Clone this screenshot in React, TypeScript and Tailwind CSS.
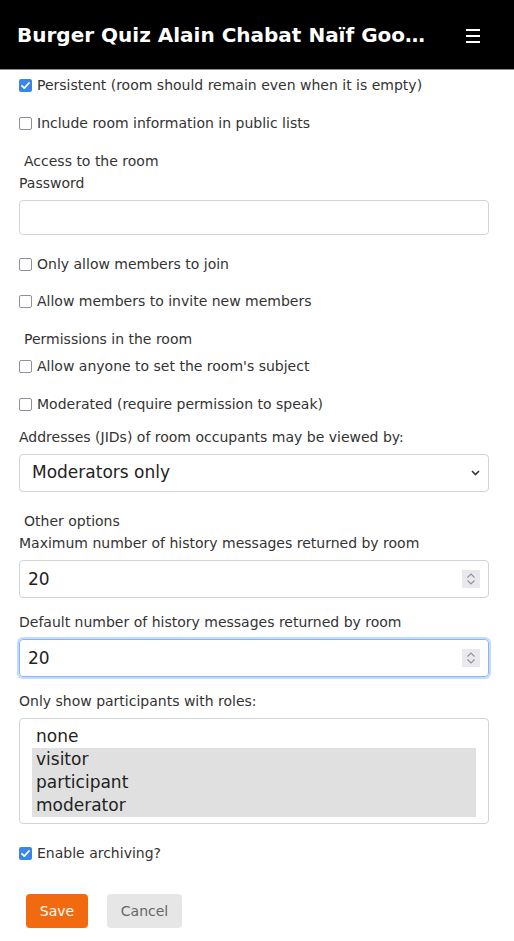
import React, { useState } from 'react';

const font = { fontFamily: '"DejaVu Sans", "Noto Sans", sans-serif' };

function CheckRow({ label, checked = false, className = '' }: { label: string; checked?: boolean; className?: string }) {
  const [on, setOn] = useState(checked);
  return (
    <label className={`flex h-5 items-center gap-[5px] text-[14px] text-[#333] ${className}`}>
      <span className="relative flex h-[13px] w-[13px]">
        <input
          type="checkbox"
          checked={on}
          onChange={() => setOn(!on)}
          className="peer h-[13px] w-[13px] appearance-none rounded-[2px] border-[1.5px] border-[#8f8f9d] checked:border-0 checked:bg-[#3b86e4]"
        />
        <svg
          viewBox="0 0 13 13"
          className="pointer-events-none absolute inset-0 hidden h-[13px] w-[13px] peer-checked:block"
          fill="none"
          stroke="white"
          strokeWidth="1.8"
          strokeLinecap="round"
          strokeLinejoin="round"
        >
          <path d="M3 6.8l2.3 2.3L10 4" />
        </svg>
      </span>
      <span>{label}</span>
    </label>
  );
}

function Legend({ children, className = '' }: { children: React.ReactNode; className?: string }) {
  return <div className={`h-5 pl-[5px] text-[14px] leading-5 text-[#333] ${className}`}>{children}</div>;
}

function Label({ children, className = '' }: { children: React.ReactNode; className?: string }) {
  return <div className={`h-5 text-[14px] leading-5 text-[#333] ${className}`}>{children}</div>;
}

function NumberField({ focused = false, className = '' }: { focused?: boolean; className?: string }) {
  return (
    <div className={`relative ${className}`}>
      <input
        type="number"
        defaultValue={20}
        className={`h-[38px] w-full rounded-[4px] border pl-2 pr-8 text-[17px] text-[#222] outline-none [appearance:textfield] [&::-webkit-inner-spin-button]:appearance-none [&::-webkit-outer-spin-button]:appearance-none ${
          focused
            ? 'border-[#86b7fe] shadow-[0_0_0_2px_rgba(13,110,253,0.25)]'
            : 'border-[#ced4da]'
        }`}
      />
      {/* spinner */}
      <span className="pointer-events-none absolute right-[9px] top-[10px] flex h-[18px] w-[18px] items-center justify-center bg-[#e9e9ed]">
        <svg viewBox="0 0 10 14" className="h-[14px] w-[10px]" fill="none" stroke="#8f8f9d" strokeWidth="1.1">
          <path d="M1.5 5.5L5 2l3.5 3.5" />
          <path d="M1.5 8.5L5 12l3.5-3.5" />
        </svg>
      </span>
    </div>
  );
}

const roles = ['none', 'visitor', 'participant', 'moderator'];

export default function App() {
  const [selected, setSelected] = useState<string[]>(['visitor', 'participant', 'moderator']);

  const toggleRole = (r: string) =>
    setSelected((s) => (s.includes(r) ? s.filter((x) => x !== r) : [...s, r]));

  return (
    <div className="min-h-screen bg-white" style={font}>
      {/* Header */}
      <header className="flex h-[70px] items-center justify-between border-b border-[#8c8c8c] bg-black pl-[17px] pr-[34px]">
        <h1 className="max-w-[410px] truncate text-[20px] font-bold text-white">
          Burger Quiz Alain Chabat Naïf Good Show Edition
        </h1>
        <button className="flex flex-col gap-[4px] pt-[2px]" title="Menu">
          <span className="block h-[2px] w-[14px] bg-white" />
          <span className="block h-[2px] w-[14px] bg-white" />
          <span className="block h-[2px] w-[14px] bg-white" />
        </button>
      </header>

      <form className="flex flex-col pb-[13px] pl-[19px] pr-[25px]" onSubmit={(e) => e.preventDefault()}>
        <CheckRow className="mt-[5px]" label="Persistent (room should remain even when it is empty)" checked />
        <CheckRow className="mt-[18px]" label="Include room information in public lists" />

        <Legend className="mt-[18px]">Access to the room</Legend>
        <Label className="mt-[2px]">Password</Label>
        <input
          type="password"
          className="mt-[7px] h-[35px] w-full rounded-[4px] border border-[#ced4da] px-2 text-[16px] outline-none"
        />

        <CheckRow className="mt-[19px]" label="Only allow members to join" />
        <CheckRow className="mt-[17px]" label="Allow members to invite new members" />

        <Legend className="mt-[18px]">Permissions in the room</Legend>
        <CheckRow className="mt-[7px]" label="Allow anyone to set the room's subject" />
        <CheckRow className="mt-[18px]" label="Moderated (require permission to speak)" />

        <Label className="mt-[13px]">Addresses (JIDs) of room occupants may be viewed by:</Label>
        <div className="relative mt-[7px]">
          <select
            defaultValue="moderator"
            className="h-[38px] w-full appearance-none rounded-[4px] border border-[#ced4da] bg-white pl-3 text-[17px] text-[#222] outline-none"
          >
            <option value="moderator">Moderators only</option>
            <option value="anyone">Anyone</option>
          </select>
          <svg
            className="pointer-events-none absolute right-[9px] top-[16px] h-[6px] w-[9px]"
            viewBox="0 0 9 6"
            fill="none"
            stroke="#333"
            strokeWidth="1.6"
          >
            <path d="M1 1l3.5 3.5L8 1" />
          </svg>
        </div>

        <Legend className="mt-[19px]">Other options</Legend>
        <Label className="mt-[2px]">Maximum number of history messages returned by room</Label>
        <NumberField className="mt-[7px]" />

        <Label className="mt-[14px]">Default number of history messages returned by room</Label>
        <NumberField className="mt-[7px]" focused />

        <Label className="mt-[14px]">Only show participants with roles:</Label>
        <div
          role="listbox"
          aria-multiselectable="true"
          className="mt-[7px] h-[106px] w-full rounded-[4px] border border-[#ced4da] px-3 pt-[6px]"
        >
          {roles.map((r) => (
            <div
              key={r}
              role="option"
              aria-selected={selected.includes(r)}
              onClick={() => toggleRole(r)}
              className={`h-[23px] cursor-default pl-1 text-[17px] leading-[23px] text-[#222] ${
                selected.includes(r) ? 'bg-[#e0e0e0]' : ''
              }`}
            >
              {r}
            </div>
          ))}
        </div>

        <CheckRow className="mt-[19px]" label="Enable archiving?" checked />

        <div className="mt-[31px] flex gap-[19px] pl-[7px]">
          <button
            type="submit"
            className="h-[34px] w-[62px] rounded-[4px] bg-[#f26a10] text-[14px] text-white"
          >
            Save
          </button>
          <button
            type="button"
            className="h-[34px] w-[75px] rounded-[4px] bg-[#e6e6e6] text-[14px] text-[#666]"
          >
            Cancel
          </button>
        </div>
      </form>
    </div>
  );
}
